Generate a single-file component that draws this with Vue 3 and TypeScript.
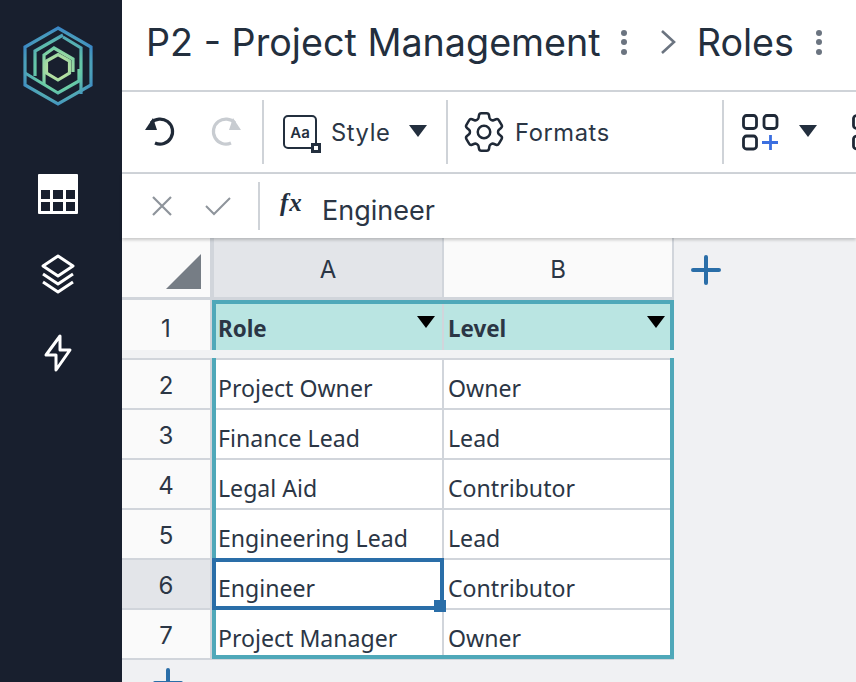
<script setup lang="ts">
interface Row {
  num: number
  role: string
  level: string
}

const rows: Row[] = [
  { num: 2, role: 'Project Owner', level: 'Owner' },
  { num: 3, role: 'Finance Lead', level: 'Lead' },
  { num: 4, role: 'Legal Aid', level: 'Contributor' },
  { num: 5, role: 'Engineering Lead', level: 'Lead' },
  { num: 6, role: 'Engineer', level: 'Contributor' },
  { num: 7, role: 'Project Manager', level: 'Owner' },
]

const gear = 'M9.594 3.94c.09-.542.56-.94 1.11-.94h2.593c.55 0 1.02.398 1.11.94l.213 1.281c.063.374.313.686.645.87.074.04.147.083.22.127.324.196.72.257 1.075.124l1.217-.456a1.125 1.125 0 011.37.49l1.296 2.247a1.125 1.125 0 01-.26 1.431l-1.003.827c-.293.24-.438.613-.431.992a6.759 6.759 0 010 .255c-.007.378.138.75.43.99l1.005.828c.424.35.534.954.26 1.43l-1.298 2.247a1.125 1.125 0 01-1.369.491l-1.217-.456c-.355-.133-.75-.072-1.076.124a6.57 6.57 0 01-.22.128c-.331.183-.581.495-.644.869l-.213 1.28c-.09.543-.56.941-1.11.941h-2.594c-.55 0-1.02-.398-1.11-.94l-.213-1.281c-.062-.374-.312-.686-.644-.87a6.52 6.52 0 01-.22-.127c-.325-.196-.72-.257-1.076-.124l-1.217.456a1.125 1.125 0 01-1.369-.49l-1.297-2.247a1.125 1.125 0 01.26-1.431l1.004-.827c.292-.24.437-.613.43-.992a6.932 6.932 0 010-.255c.007-.378-.138-.75-.43-.99l-1.004-.828a1.125 1.125 0 01-.26-1.43l1.297-2.247a1.125 1.125 0 011.37-.491l1.216.456c.356.133.751.072 1.076-.124.072-.044.146-.087.22-.128.332-.183.582-.495.644-.869l.214-1.281z'
</script>

<template>
  <div class="app">
    <aside class="rail">
      <svg class="logo" width="72" height="82" viewBox="22 25 72 82" fill="none">
        <defs>
          <radialGradient id="lg" gradientUnits="userSpaceOnUse" cx="58" cy="68" r="40">
            <stop offset="0.15" stop-color="#cde6a0" />
            <stop offset="0.55" stop-color="#68cba6" />
            <stop offset="1" stop-color="#3a86c6" />
          </radialGradient>
        </defs>
        <g stroke="url(#lg)" stroke-width="3.2" stroke-linejoin="miter">
          <path d="M58 28 L91 47 V85 L58 104 L25 85 V47 Z" />
          <path d="M63 35 L35 51 V76" />
          <path d="M25 73 L58 93 L79 81 V69" />
          <path d="M63 37 L81 48 V94" />
          <path d="M44 84 V55 L54 48 L73 59 V72" />
          <path d="M58 54.5 L69.5 61 V73 L58 80 L46.5 73 V61 Z" />
        </g>
      </svg>
      <svg class="rail-icon" width="40" height="40" viewBox="0 0 40 40">
        <path fill="#fff" fill-rule="evenodd" d="M1 0h38a1 1 0 0 1 1 1v38a1 1 0 0 1-1 1H1a1 1 0 0 1-1-1V1a1 1 0 0 1 1-1zM3 16v9h9v-9zM15 16v9h10v-9zM28 16v9h9v-9zM3 28v9h9v-9zM15 28v9h10v-9zM28 28v9h9v-9z" />
      </svg>
      <svg class="rail-icon" width="34" height="40" viewBox="0 0 34 40" fill="none" stroke="#fff" stroke-width="3">
        <path d="M17 2 L32 12 L17 22 L2 12 Z" stroke-linejoin="round" />
        <path d="M2 20 L17 30 L32 20" stroke-linejoin="round" />
        <path d="M2 28 L17 38 L32 28" stroke-linejoin="round" />
      </svg>
      <svg class="rail-icon" width="30" height="38" viewBox="0 0 30 38" fill="none" stroke="#fff" stroke-width="3" stroke-linejoin="round">
        <path d="M17 2 L3 21 H13 L13 36 L27 16 H17 Z" />
      </svg>
    </aside>

    <main class="content">
      <header class="title-bar">
        <h1>P2 - Project Management</h1>
        <span class="dots"><i /><i /><i /></span>
        <svg class="crumb" width="16" height="26" viewBox="0 0 16 26" fill="none" stroke="#6b7480" stroke-width="2.6">
          <path d="M2 2 L14 13 L2 24" />
        </svg>
        <h1>Roles</h1>
        <span class="dots dots-end"><i /><i /><i /></span>
      </header>

      <div class="toolbar">
        <div class="tool-group history">
          <svg width="36" height="32" viewBox="0 0 36 32" fill="none" stroke="#1f2937" stroke-width="3.2">
            <path d="M9 7 A12.5 12.5 0 1 1 13 27" />
            <path d="M3 14 L11 2 L15 14 Z" fill="#1f2937" stroke="none" />
          </svg>
          <svg width="36" height="32" viewBox="0 0 36 32" fill="none" stroke="#c8ccd1" stroke-width="3.2">
            <path d="M27 7 A12.5 12.5 0 1 0 23 27" />
            <path d="M33 14 L25 2 L21 14 Z" fill="#c8ccd1" stroke="none" />
          </svg>
        </div>
        <div class="tool-group style-group">
          <span class="style-icon">
            <span class="aa">Aa</span>
            <b class="corner" />
          </span>
          <span class="tool-label">Style</span>
          <i class="caret" />
        </div>
        <div class="tool-group formats">
          <svg width="50" height="50" viewBox="0 0 24 24" fill="none" stroke="#1f2937" stroke-width="1.2">
            <path :d="gear" />
            <circle cx="12" cy="12" r="3" />
          </svg>
          <span class="tool-label">Formats</span>
        </div>
        <div class="tool-group add-group">
          <svg width="37" height="37" viewBox="0 0 37 37" fill="none" stroke="#1f2937" stroke-width="2.8">
            <rect x="1.5" y="1.5" width="13" height="13" rx="3" />
            <rect x="22" y="1.5" width="13" height="13" rx="3" />
            <rect x="1.5" y="22" width="13" height="13" rx="3" />
            <path d="M20 28.5 H36 M28.5 21 V36" stroke="#3b6fe0" />
          </svg>
          <i class="caret" />
          <svg class="cut" width="20" height="37" viewBox="0 0 20 37" fill="none" stroke="#1f2937" stroke-width="2.8">
            <rect x="1.5" y="1.5" width="13" height="13" rx="3" />
            <rect x="1.5" y="22" width="13" height="13" rx="3" />
          </svg>
        </div>
      </div>

      <div class="formula">
        <div class="formula-actions">
          <svg width="20" height="20" viewBox="0 0 20 20" stroke="#8e949b" stroke-width="2.2">
            <path d="M1 1 L19 19 M19 1 L1 19" />
          </svg>
          <svg width="26" height="20" viewBox="0 0 26 20" fill="none" stroke="#8e949b" stroke-width="2">
            <path d="M1 10 L9 18 L25 2" />
          </svg>
        </div>
        <span class="fx">fx</span>
        <span class="formula-value">Engineer</span>
      </div>

      <div class="sheet">
        <div class="grid">
          <div class="corner-cell"><i class="corner-tri" /></div>
          <div class="col-head active">A</div>
          <div class="col-head">B</div>

          <div class="row-head frozen">1</div>
          <div class="cell head-cell"><b>Role</b><i class="filter" /></div>
          <div class="cell head-cell col-b"><b>Level</b><i class="filter" /></div>

          <div class="spacer" />

          <template v-for="r in rows" :key="r.num">
            <div class="row-head" :class="{ active: r.num === 6 }">{{ r.num }}</div>
            <div class="cell">{{ r.role }}</div>
            <div class="cell col-b">{{ r.level }}</div>
          </template>

          <i class="frame frame-head" />
          <i class="frame frame-body" />
          <i class="selection"><b class="handle" /></i>
        </div>
        <svg class="add-col" width="30" height="30" viewBox="0 0 30 30" stroke="#2a6ea8" stroke-width="4" stroke-linecap="round">
          <path d="M2 15 H28 M15 2 V28" />
        </svg>
        <svg class="add-row" width="30" height="30" viewBox="0 0 30 30" stroke="#2a6ea8" stroke-width="4" stroke-linecap="round">
          <path d="M2 15 H28 M15 2 V28" />
        </svg>
      </div>
    </main>
  </div>
</template>

<style>
html, body {
  margin: 0;
  height: 100%;
  overflow: hidden;
}
</style>

<style scoped>
.app {
  display: flex;
  width: 856px;
  height: 682px;
  overflow: hidden;
  font-family: Inter, "Liberation Sans", sans-serif;
  color: #232f3e;
  background: #fff;
}
.rail {
  flex: 0 0 122px;
  background: #181f2e;
  display: flex;
  flex-direction: column;
  align-items: center;
  padding: 25px 6px 0 0;
  box-sizing: border-box;
}
.logo { display: block; margin-bottom: 67px; }
.rail-icon { display: block; margin-bottom: 40px; }
.content {
  flex: 1;
  min-width: 0;
  display: flex;
  flex-direction: column;
}
.title-bar {
  height: 90px;
  display: flex;
  align-items: center;
  padding-left: 24px;
  box-sizing: border-box;
  padding-bottom: 6px;
}
.title-bar h1 {
  margin: 0;
  font-size: 37.7px;
  font-weight: 400;
  white-space: nowrap;
  color: #232f3e;
}
.dots {
  display: flex;
  flex-direction: column;
  gap: 3.5px;
  margin-left: 20px;
}
.dots-end { margin-left: 22px; }
.dots i {
  width: 6px;
  height: 6px;
  border-radius: 50%;
  background: #6b7480;
}
.crumb { margin: 0 21px 0 33px; }
.toolbar {
  height: 80px;
  border-top: 2px solid #cfd3d8;
  border-bottom: 2px solid #cfd3d8;
  display: flex;
  align-items: center;
  overflow: hidden;
  flex: none;
  box-sizing: content-box;
}
.tool-group {
  height: 64px;
  display: flex;
  align-items: center;
  flex: none;
  box-sizing: border-box;
  border-right: 2px solid #cfd3d8;
}
.history { width: 142px; padding-left: 20px; gap: 30px; }
.style-group { width: 184px; padding-left: 19px; }
.style-icon {
  position: relative;
  width: 34px;
  height: 34px;
  box-sizing: border-box;
  border: 2.5px solid #232f3e;
  border-radius: 5px;
  display: flex;
  align-items: center;
  justify-content: center;
}
.aa { font-size: 15px; font-weight: 600; }
.corner {
  position: absolute;
  right: -6px;
  bottom: -6px;
  width: 4px;
  height: 4px;
  background: #fff;
  border: 3px solid #232f3e;
}
.tool-label {
  font-size: 23.7px;
  letter-spacing: 0.6px;
  color: #2b3645;
}
.style-group .tool-label { margin-left: 14px; }
.caret {
  width: 0;
  height: 0;
  border-left: 9.5px solid transparent;
  border-right: 9.5px solid transparent;
  border-top: 12px solid #232f3e;
  margin-top: -2px;
}
.style-group .caret { margin-left: 19px; }
.formats { width: 276px; padding-left: 11px; gap: 6px; }
.add-group { border-right: none; padding-left: 18px; }
.add-group .caret { margin-left: 20px; }
.cut { margin-left: 35px; }
.formula {
  height: 64px;
  flex: none;
  display: flex;
  align-items: center;
  position: relative;
  z-index: 1;
  box-shadow: 0 2px 3px rgba(0, 0, 0, 0.2);
  background: #fff;
}
.formula-actions {
  width: 138px;
  height: 48px;
  box-sizing: border-box;
  border-right: 2px solid #cfd3d8;
  display: flex;
  align-items: center;
  padding-left: 30px;
  gap: 33px;
}
.fx {
  width: 23px;
  margin-left: 20px;
  font: italic 700 25px "Liberation Serif", serif;
  letter-spacing: 1px;
  color: #232f3e;
  position: relative;
  top: -3px;
}
.formula-value {
  margin-left: 19px;
  font-size: 27px;
  color: #2b3645;
  position: relative;
  top: 4px;
}
.sheet {
  flex: 1;
  background: #f0f1f3;
  position: relative;
  overflow: hidden;
}
.grid {
  position: relative;
  display: grid;
  grid-template-columns: 90px 232px 230px;
  grid-template-rows: 62px 50px 10px repeat(6, 50px);
  width: 552px;
}
.corner-cell, .row-head, .col-head {
  background: #fafafa;
  box-sizing: border-box;
  display: flex;
  align-items: center;
  justify-content: center;
  font-size: 24px;
  color: #2b3645;
  border-bottom: 2px solid #d1d5db;
  border-right: 2px solid #d1d5db;
  padding-top: 3px;
}
.corner-cell { position: relative; border-bottom-width: 3px; }
.corner-tri {
  position: absolute;
  right: 9px;
  bottom: 8px;
  width: 0;
  height: 0;
  border-left: 35px solid transparent;
  border-bottom: 35px solid #767d85;
}
.col-head { border-bottom-width: 3px; padding-top: 4px; }
.col-head.active { border-left: 2px solid #d1d5db; }
.col-head.active, .row-head.active { background: #e3e5e9; }
.row-head.frozen { border-bottom: none; padding-top: 6px; }
.cell {
  background: #fff;
  box-sizing: border-box;
  border-bottom: 2px solid #d1d5db;
  border-right: 2px solid #d1d5db;
  padding: 13px 0 0 6px;
  font: 23.1px "Noto Sans", sans-serif;
  line-height: 30px;
  white-space: nowrap;
  color: #2b3645;
}
.col-b { padding-left: 4px; }
.head-cell {
  background: #bae5e2;
  border-bottom: none;
  padding-top: 14px;
  position: relative;
  font-size: 22.4px;
}
.filter {
  position: absolute;
  right: 7px;
  top: 16px;
  width: 0;
  height: 0;
  border-left: 9px solid transparent;
  border-right: 9px solid transparent;
  border-top: 12px solid #000;
}
.spacer {
  grid-column: 1 / -1;
  background: #f1f2f4;
  border-bottom: 2px solid #d1d5db;
}
.frame {
  position: absolute;
  left: 90px;
  width: 462px;
  box-sizing: border-box;
  border: 4px solid #4fa8b9;
  pointer-events: none;
}
.frame-head { top: 62px; height: 50px; border-bottom: none; }
.frame-body { top: 120px; height: 301px; border-top: none; }
.selection {
  position: absolute;
  left: 90px;
  top: 320px;
  width: 232px;
  height: 52px;
  box-sizing: border-box;
  border: 4px solid #2a6ea8;
}
.handle {
  position: absolute;
  right: -6px;
  bottom: -6px;
  width: 12px;
  height: 12px;
  background: #2a6ea8;
}
.add-col { position: absolute; left: 569px; top: 17px; }
.add-row { position: absolute; left: 31px; top: 430px; }
</style>
